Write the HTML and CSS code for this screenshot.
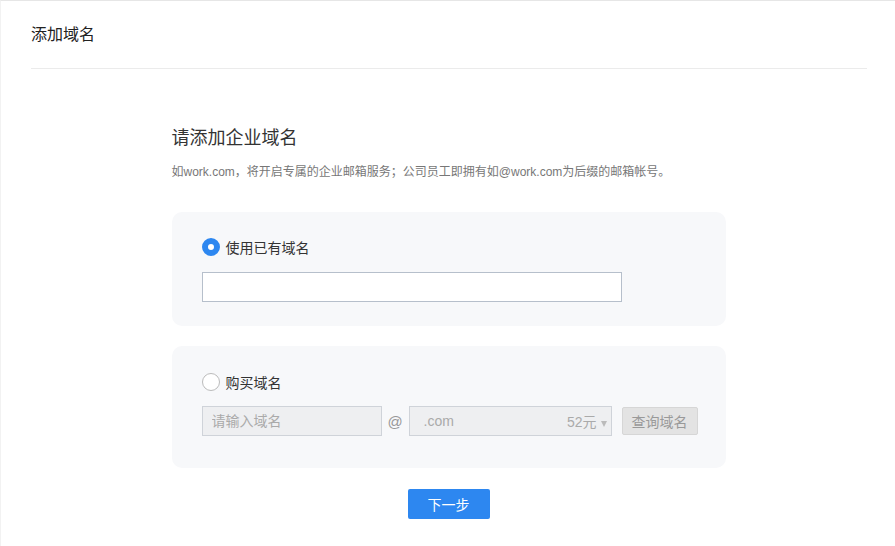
FILE: index.html
```html
<!DOCTYPE html>
<html lang="zh-CN">
<head>
    <meta charset="UTF-8">
    <title>添加域名</title>
    <link rel="stylesheet" href="styles.css">
</head>
<body>
    <div class="page">
        <header class="page-header">
            <h1>添加域名</h1>
        </header>

        <div class="content">
            <h2>请添加企业域名</h2>
            <p class="desc">如work.com，将开启专属的企业邮箱服务；公司员工即拥有如@work.com为后缀的邮箱帐号。</p>

            <div class="card">
                <label class="radio-row">
                    <span class="radio checked"></span>
                    <span>使用已有域名</span>
                </label>
                <input type="text" class="domain-input">
            </div>

            <div class="card card-buy">
                <label class="radio-row">
                    <span class="radio"></span>
                    <span>购买域名</span>
                </label>
                <div class="buy-row">
                    <input type="text" class="buy-input" placeholder="请输入域名" disabled>
                    <span class="at">@</span>
                    <div class="suffix">
                        <span>.com</span>
                        <span class="price">52元 <i class="caret"></i></span>
                    </div>
                    <button class="query-btn" disabled>查询域名</button>
                </div>
            </div>

            <div class="actions">
                <button class="next-btn">下一步</button>
            </div>
        </div>
    </div>
</body>
</html>
```

FILE: styles.css
```css
* {
    margin: 0;
    padding: 0;
    box-sizing: border-box;
}

body {
    font-family: 'Liberation Sans', 'Noto Sans CJK SC', sans-serif;
    color: #333;
    background-color: #fff;
}

.page {
    height: 546px;
    border-top: 1px solid #e6e6e6;
    border-left: 1px solid #f2f2f2;
    padding: 0 28px 0 29px;
}

.page-header {
    height: 68px;
    margin-left: 1px;
    border-bottom: 1px solid #ebebeb;
}

.page-header h1 {
    font-size: 16px;
    font-weight: normal;
    line-height: 68px;
    color: #222;
}

.content {
    width: 554px;
    margin: 0 auto;
    padding-top: 59px;
}

.content h2 {
    font-size: 18px;
    font-weight: normal;
    line-height: 20px;
    color: #333;
}

.desc {
    margin-top: 16px;
    font-size: 12px;
    line-height: 16px;
    color: #777;
}

.card {
    margin-top: 32px;
    padding: 26px 20px 24px 30px;
    background-color: #f7f8fa;
    border-radius: 10px;
}

.card-buy {
    margin-top: 20px;
    padding-top: 27px;
    padding-bottom: 32px;
}

.radio-row {
    display: flex;
    align-items: center;
    height: 18px;
    font-size: 14px;
    color: #333;
}

.radio {
    width: 18px;
    height: 18px;
    margin-right: 6px;
    border-radius: 50%;
    border: 1px solid #bbb;
    background-color: #fff;
}

.radio.checked {
    border: 6px solid #2d87f0;
}

.domain-input {
    display: block;
    width: 420px;
    height: 30px;
    margin-top: 16px;
    border: 1px solid #b6bfcb;
    background-color: #fff;
    outline: none;
}

.buy-row {
    display: flex;
    align-items: center;
    margin-top: 15px;
}

.buy-row > * {
    flex-shrink: 0;
}

.buy-input {
    width: 180px;
    height: 30px;
    padding: 0 9px;
    border: 1px solid #cfd3d9;
    background-color: #eeeff1;
    font-family: inherit;
    font-size: 14px;
}

.buy-input::placeholder {
    color: #aaa;
}

.at {
    width: 27px;
    text-align: center;
    font-size: 15px;
    color: #999;
}

.suffix {
    display: flex;
    justify-content: space-between;
    align-items: center;
    width: 203px;
    height: 30px;
    padding: 0 4px 0 14px;
    border: 1px solid #cfd3d9;
    background-color: #eeeff1;
    font-size: 14px;
    color: #aaa;
}

.caret {
    display: inline-block;
    width: 0;
    height: 0;
    border-left: 3px solid transparent;
    border-right: 3px solid transparent;
    border-top: 6px solid #bbb;
}

.query-btn {
    width: 76px;
    height: 28px;
    margin-left: 10px;
    border: 1px solid #d6d6d6;
    border-radius: 2px;
    background-color: #e3e3e3;
    font-family: inherit;
    font-size: 14px;
    color: #999;
}

.actions {
    display: flex;
    justify-content: center;
    margin-top: 21px;
}

.next-btn {
    width: 82px;
    height: 30px;
    border: none;
    border-radius: 2px;
    background-color: #2d87f0;
    font-family: inherit;
    font-size: 14px;
    color: #fff;
    cursor: pointer;
}
```
